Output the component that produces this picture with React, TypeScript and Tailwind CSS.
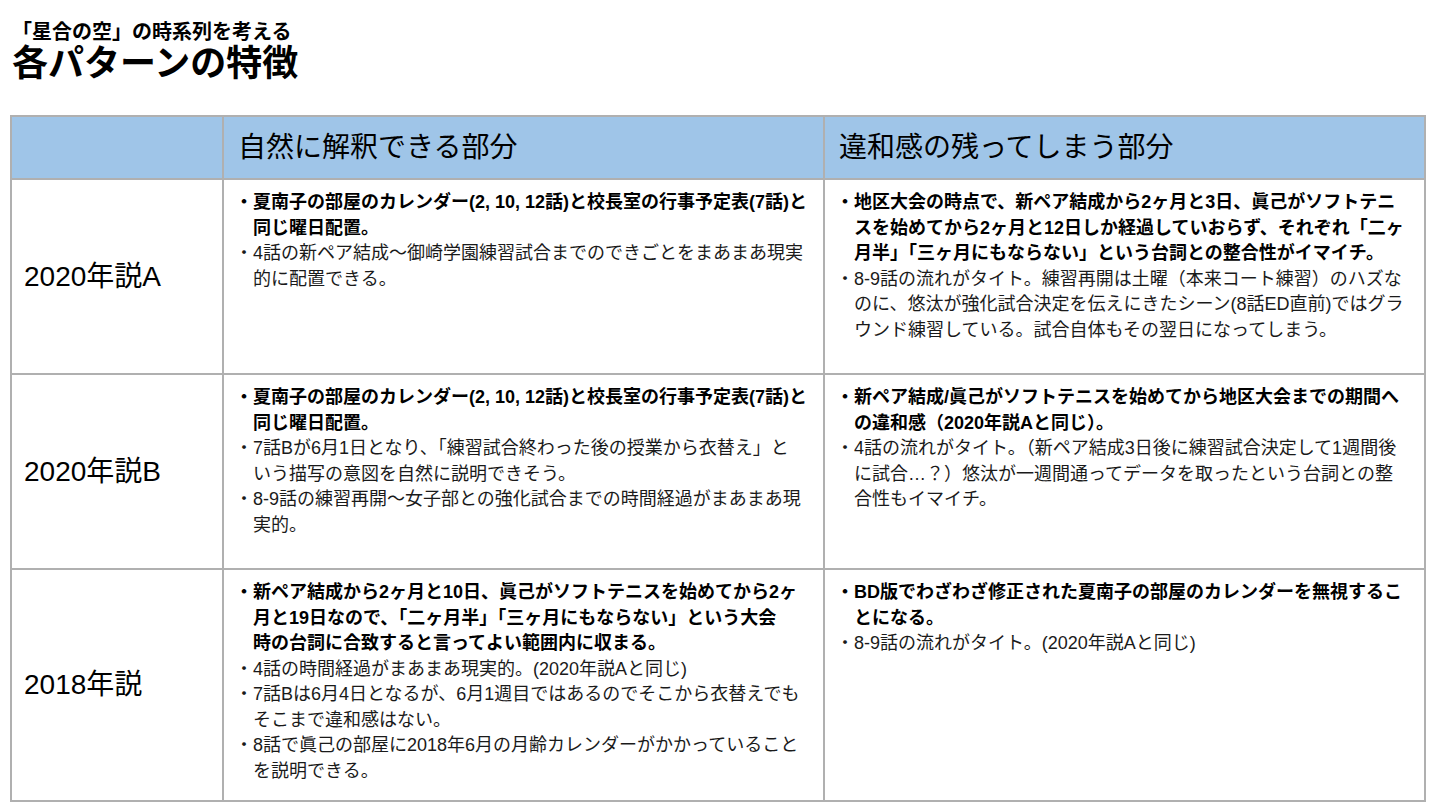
type Item = { bold?: boolean; lines: string[] };

const rows: { label: string; good: Item[]; bad: Item[] }[] = [
  {
    label: "2020年説A",
    good: [
      { bold: true, lines: ["夏南子の部屋のカレンダー(2, 10, 12話)と校長室の行事予定表(7話)と", "同じ曜日配置。"] },
      { lines: ["4話の新ペア結成～御崎学園練習試合までのできごとをまあまあ現実", "的に配置できる。"] },
    ],
    bad: [
      {
        bold: true,
        lines: [
          "地区大会の時点で、新ペア結成から2ヶ月と3日、眞己がソフトテニ",
          "スを始めてから2ヶ月と12日しか経過していおらず、それぞれ「二ヶ",
          "月半」「三ヶ月にもならない」という台詞との整合性がイマイチ。",
        ],
      },
      {
        lines: [
          "8-9話の流れがタイト。練習再開は土曜（本来コート練習）のハズな",
          "のに、悠汰が強化試合決定を伝えにきたシーン(8話ED直前)ではグラ",
          "ウンド練習している。試合自体もその翌日になってしまう。",
        ],
      },
    ],
  },
  {
    label: "2020年説B",
    good: [
      { bold: true, lines: ["夏南子の部屋のカレンダー(2, 10, 12話)と校長室の行事予定表(7話)と", "同じ曜日配置。"] },
      { lines: ["7話Bが6月1日となり、「練習試合終わった後の授業から衣替え」と", "いう描写の意図を自然に説明できそう。"] },
      { lines: ["8-9話の練習再開～女子部との強化試合までの時間経過がまあまあ現", "実的。"] },
    ],
    bad: [
      { bold: true, lines: ["新ペア結成/眞己がソフトテニスを始めてから地区大会までの期間へ", "の違和感（2020年説Aと同じ）。"] },
      {
        lines: [
          "4話の流れがタイト。（新ペア結成3日後に練習試合決定して1週間後",
          "に試合…？）悠汰が一週間通ってデータを取ったという台詞との整",
          "合性もイマイチ。",
        ],
      },
    ],
  },
  {
    label: "2018年説",
    good: [
      {
        bold: true,
        lines: [
          "新ペア結成から2ヶ月と10日、眞己がソフトテニスを始めてから2ヶ",
          "月と19日なので、「二ヶ月半」「三ヶ月にもならない」という大会",
          "時の台詞に合致すると言ってよい範囲内に収まる。",
        ],
      },
      { lines: ["4話の時間経過がまあまあ現実的。(2020年説Aと同じ)"] },
      { lines: ["7話Bは6月4日となるが、6月1週目ではあるのでそこから衣替えでも", "そこまで違和感はない。"] },
      { lines: ["8話で眞己の部屋に2018年6月の月齢カレンダーがかかっていること", "を説明できる。"] },
    ],
    bad: [
      { bold: true, lines: ["BD版でわざわざ修正された夏南子の部屋のカレンダーを無視するこ", "とになる。"] },
      { lines: ["8-9話の流れがタイト。(2020年説Aと同じ)"] },
    ],
  },
];

function Bullets({ items }: { items: Item[] }) {
  return (
    <div className="overflow-hidden bg-white pl-[11px] pr-2 pt-[10px] text-[18px] leading-[25.5px]">
      {items.map((it, i) => (
        <div
          key={i}
          className={`pl-[18px] -indent-[18px] whitespace-nowrap ${it.bold ? "font-bold text-black" : "text-[#1a1a1a]"}`}
        >
          ・
          {it.lines.map((l, j) => (
            <span key={j}>
              {j > 0 && <br />}
              {l}
            </span>
          ))}
        </div>
      ))}
    </div>
  );
}

export default function App() {
  return (
    <div className="min-h-screen bg-white font-['Liberation_Sans','Noto_Sans_CJK_JP',sans-serif] text-black">
      <div className="pl-3 pt-[20px]">
        <p className="text-[20px] font-bold leading-[24px]">「星合の空」の時系列を考える</p>
        <h1 className="text-[36px] font-bold leading-[40px]">各パターンの特徴</h1>
      </div>

      <div className="ml-[10px] mt-[31px] grid w-max grid-cols-[210px_599px_599px] grid-rows-[61px_193px_193px_230px] gap-[2px] bg-[#b0b0b0] p-[2px]">
        <div className="bg-[#9fc5e8]" />
        <div className="flex items-center bg-[#9fc5e8] pl-[14px] text-[28px]">自然に解釈できる部分</div>
        <div className="flex items-center bg-[#9fc5e8] pl-[14px] text-[28px]">違和感の残ってしまう部分</div>

        {rows.map((r) => (
          <div key={r.label} className="contents">
            <div className="flex items-center bg-white pl-3 text-[28px]">{r.label}</div>
            <Bullets items={r.good} />
            <Bullets items={r.bad} />
          </div>
        ))}
      </div>
    </div>
  );
}
